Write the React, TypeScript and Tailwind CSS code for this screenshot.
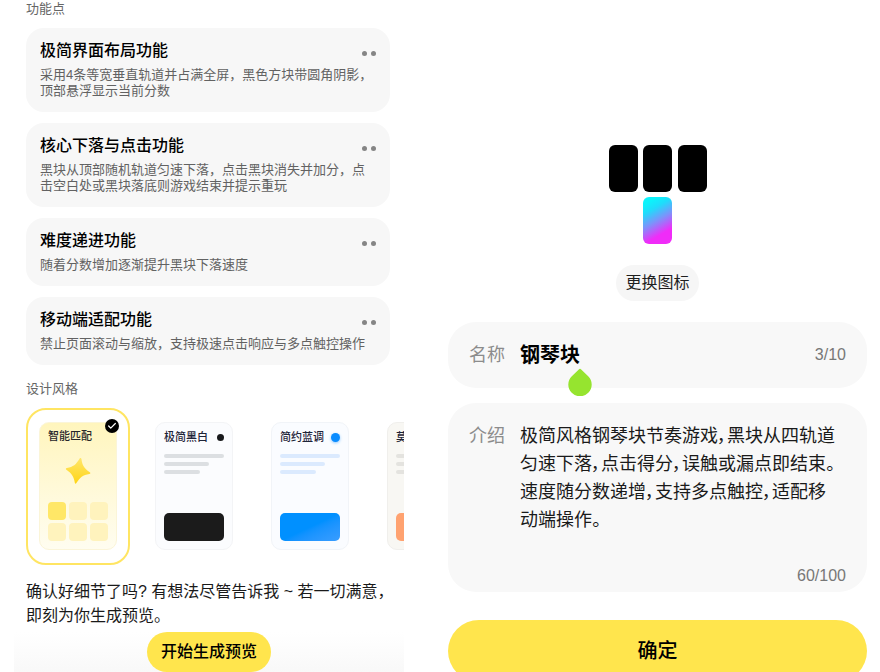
import clsx from "clsx";
import { Check } from "lucide-react";
import { useState } from "react";

const features = [
  {
    title: "极简界面布局功能",
    lines: ["采用4条等宽垂直轨道并占满全屏，黑色方块带圆角阴影，", "顶部悬浮显示当前分数"],
  },
  {
    title: "核心下落与点击功能",
    lines: ["黑块从顶部随机轨道匀速下落，点击黑块消失并加分，点", "击空白处或黑块落底则游戏结束并提示重玩"],
  },
  {
    title: "难度递进功能",
    lines: ["随着分数增加逐渐提升黑块下落速度"],
  },
  {
    title: "移动端适配功能",
    lines: ["禁止页面滚动与缩放，支持极速点击响应与多点触控操作"],
  },
];

const plainStyles = [
  {
    name: "极简黑白",
    card: "border-[#f3f4f6] bg-[#fbfcfe]",
    dot: "size-[7px] bg-[#18191b]",
    bar: "bg-[#dcdfe2]",
    block: "bg-[#1b1b1b]",
  },
  {
    name: "简约蓝调",
    card: "border-[#f1f4f8] bg-[#fafcff]",
    dot: "size-[9px] bg-[#0a8cff] shadow-[0_1px_3px_#8cc8ff]",
    bar: "bg-[#dbeafe]",
    block: "bg-linear-to-br from-[#0090ff] from-50% to-[#389dff]",
  },
  {
    name: "莫",
    card: "border-[#f0efec] bg-[#f8f7f3]",
    dot: "size-[9px] bg-[#ffa270]",
    bar: "bg-[#e4e3df]",
    block: "bg-[#ffa270]",
  },
];

function FeatureCard({ title, lines }: { title: string; lines: string[] }) {
  return (
    <article className="rounded-[18px] bg-[#f7f7f7] px-[14px] pt-[11px] pb-[13px]">
      <div className="flex items-center justify-between">
        <h3 className="text-base leading-6 font-medium text-black">{title}</h3>
        <button type="button" aria-label="更多" className="flex gap-1 pt-[5px]">
          <span className="size-[5px] rounded-full bg-[#858585]" />
          <span className="size-[5px] rounded-full bg-[#858585]" />
        </button>
      </div>
      <p className="mt-1 text-[13px] leading-4 whitespace-nowrap text-[#626262]">
        {lines.map((line) => (
          <span key={line} className="block">
            {line}
          </span>
        ))}
      </p>
    </article>
  );
}

function SmartPreview() {
  return (
    <div className="flex h-32 flex-col rounded-[10px] border border-[#fbf5d8] bg-linear-to-b from-[#fff5bd] to-[#fffdf0] px-2 pt-1 pb-2">
      <span className="text-left text-[11px] leading-[18px] font-medium text-[#27272a]">
        智能匹配
      </span>
      <svg viewBox="0 0 26 28" className="mx-auto mt-3 h-7 w-[26px]">
        <defs>
          <linearGradient id="spark" x1="0" y1="0" x2="0" y2="1">
            <stop offset="0" stopColor="#ffe66b" />
            <stop offset="1" stopColor="#ffd516" />
          </linearGradient>
        </defs>
        <path
          d="M14.8 1.3C15.5.7 16.3 1 16.5 2.2C17.2 7.9 18.8 11.1 24.8 15.2C25.7 15.9 25.5 16.7 24.3 16.9C17.8 18 15 20.2 11.4 26.1C10.8 27 10 26.8 9.8 25.7C8.8 20 7 16.6 1.4 12.8C.5 12.1.7 11.2 1.9 11C8.2 9.9 11 7.8 14.8 1.3Z"
          fill="url(#spark)"
        />
      </svg>
      <div className="mt-auto grid grid-cols-3 gap-[3px]">
        {[0, 1, 2, 3, 4, 5].map((cell) => (
          <span
            key={cell}
            className={clsx("h-[18px] rounded-[4px]", cell === 0 ? "bg-[#ffe767]" : "bg-[#fff3bd]")}
          />
        ))}
      </div>
    </div>
  );
}

function PlainPreview({ name, card, dot, bar, block }: (typeof plainStyles)[number]) {
  return (
    <div className={clsx("flex h-32 flex-col rounded-[10px] border px-2 pt-[5px] pb-2", card)}>
      <div className="flex items-center justify-between">
        <span className="text-[11px] leading-[18px] font-medium text-[#1e2438]">{name}</span>
        <span className={clsx("rounded-full", dot)} />
      </div>
      <div className="mt-2 flex flex-col gap-1">
        <span className={clsx("h-1 w-full rounded-full", bar)} />
        <span className={clsx("h-1 w-3/4 rounded-full", bar)} />
        <span className={clsx("h-1 w-3/5 rounded-full", bar)} />
      </div>
      <span className={clsx("mt-auto h-7 rounded-[5px]", block)} />
    </div>
  );
}

function PlanPanel() {
  return (
    <section className="flex min-w-0 flex-col overflow-hidden">
      <div className="pr-[14px] pl-[26px]">
        <h2 className="pt-px text-[13px] leading-4 text-[#666]">功能点</h2>
        <div className="mt-[11px] flex flex-col gap-[11px]">
          {features.map((feature) => (
            <FeatureCard key={feature.title} {...feature} />
          ))}
        </div>
        <h2 className="mt-4 text-[13px] leading-4 text-[#666]">设计风格</h2>
      </div>

      <div className="mt-[11px] flex gap-3 overflow-hidden pl-[26px]">
        <button
          type="button"
          aria-pressed="true"
          className="relative w-[104px] shrink-0 rounded-[20px] border-2 border-[#ffe562] px-[11px] pt-3 pb-[13px]"
        >
          <SmartPreview />
          <span className="absolute top-[9px] right-[9px] flex size-[14px] items-center justify-center rounded-full bg-black">
            <Check className="size-[10px] text-white" strokeWidth={3} />
          </span>
        </button>
        {plainStyles.map((style) => (
          <button
            key={style.name}
            type="button"
            aria-pressed="false"
            className="w-[104px] shrink-0 px-[13px] pt-[14px] pb-[15px]"
          >
            <PlainPreview {...style} />
          </button>
        ))}
      </div>

      <p className="mt-[15px] pl-[26px] text-base leading-6 whitespace-nowrap text-[#1a1a1a]">
        确认好细节了吗? 有想法尽管告诉我 ~ 若一切满意，
        <br />
        即刻为你生成预览。
      </p>
      <div className="mt-1 ml-[14px] flex flex-1 justify-center bg-linear-to-b from-white to-[#f7f7f7]">
        <button
          type="button"
          className="h-10 rounded-full bg-[#ffe54d] px-[14px] text-base font-medium text-black"
        >
          开始生成预览
        </button>
      </div>
    </section>
  );
}

function PianoIcon() {
  return (
    <svg viewBox="0 0 98 100" className="h-[100px] w-[98px]" role="img" aria-label="钢琴块">
      <defs>
        <linearGradient id="tile" gradientUnits="userSpaceOnUse" x1="38" y1="58" x2="58" y2="93">
          <stop offset="0" stopColor="#0cf3fb" />
          <stop offset="0.2" stopColor="#1fdcfb" />
          <stop offset="0.5" stopColor="#7c93fb" />
          <stop offset="0.85" stopColor="#f02cf8" />
        </linearGradient>
      </defs>
      <rect x="0" y="0" width="29" height="47" rx="6" />
      <rect x="34" y="0" width="29" height="47" rx="6" />
      <rect x="69" y="0" width="29" height="47" rx="6" />
      <rect x="34" y="52" width="29" height="47" rx="6" fill="url(#tile)" />
    </svg>
  );
}

function DetailPanel() {
  const [name, setName] = useState("钢琴块");
  const [intro, setIntro] = useState(
    "极简风格钢琴块节奏游戏，黑块从四轨道匀速下落，点击得分，误触或漏点即结束。速度随分数递增，支持多点触控，适配移动端操作。",
  );

  return (
    <section className="flex min-w-0 flex-col items-center pt-[145px] pr-[13px] pl-11">
      <PianoIcon />
      <button
        type="button"
        className="mt-5 h-9 shrink-0 rounded-full bg-[#f6f6f6] px-[9px] text-base text-[#1f1f1f]"
      >
        更换图标
      </button>

      <div className="relative mt-[21px] flex w-full items-center rounded-[28px] bg-[#f8f8f8] px-[21px] py-[17px]">
        <label htmlFor="game-name" className="w-[51px] shrink-0 text-[18px] leading-8 text-[#8c8c8c]">
          名称
        </label>
        <input
          id="game-name"
          value={name}
          maxLength={10}
          onChange={(e) => setName(e.target.value)}
          className="h-8 min-w-0 flex-1 bg-transparent pb-[3px] text-xl font-bold text-black outline-none"
        />
        <span className="text-base text-[#777]">3/10</span>
        {/* text cursor handle */}
        <svg viewBox="0 0 24 28" className="absolute top-[46px] left-[120px] z-10 h-7 w-6">
          <path
            d="M12 .8Q12.6.8 13.2 1.5L20.2 8.2A11.7 11.7 0 1 1 3.8 8.2L10.8 1.5Q11.4.8 12 .8Z"
            fill="#96e42f"
          />
        </svg>
      </div>

      <div className="mt-[15px] flex w-full flex-col rounded-[28px] bg-[#f8f8f8] px-[21px] pt-[19px] pb-1">
        <div className="flex items-start">
          <label htmlFor="game-intro" className="w-[51px] shrink-0 text-[18px] leading-7 text-[#8c8c8c]">
            介绍
          </label>
          <textarea
            id="game-intro"
            value={intro}
            rows={4}
            maxLength={100}
            onChange={(e) => setIntro(e.target.value)}
            className="min-w-0 flex-1 resize-none overflow-hidden bg-transparent pr-2 text-[18px] leading-7 text-[#1a1a1a] outline-none [font-feature-settings:'palt']"
          />
        </div>
        <span className="mt-[30px] self-end text-base text-[#777]">60/100</span>
      </div>

      <button
        type="button"
        className="mt-7 h-[62px] w-full shrink-0 rounded-full bg-[#ffe54d] text-xl font-medium text-black"
      >
        确定
      </button>
    </section>
  );
}

export default function App() {
  return (
    <main className="grid h-screen grid-cols-[404fr_476fr] overflow-hidden bg-white font-['Liberation_Sans','Noto_Sans_CJK_SC',sans-serif]">
      <PlanPanel />
      <DetailPanel />
    </main>
  );
}
